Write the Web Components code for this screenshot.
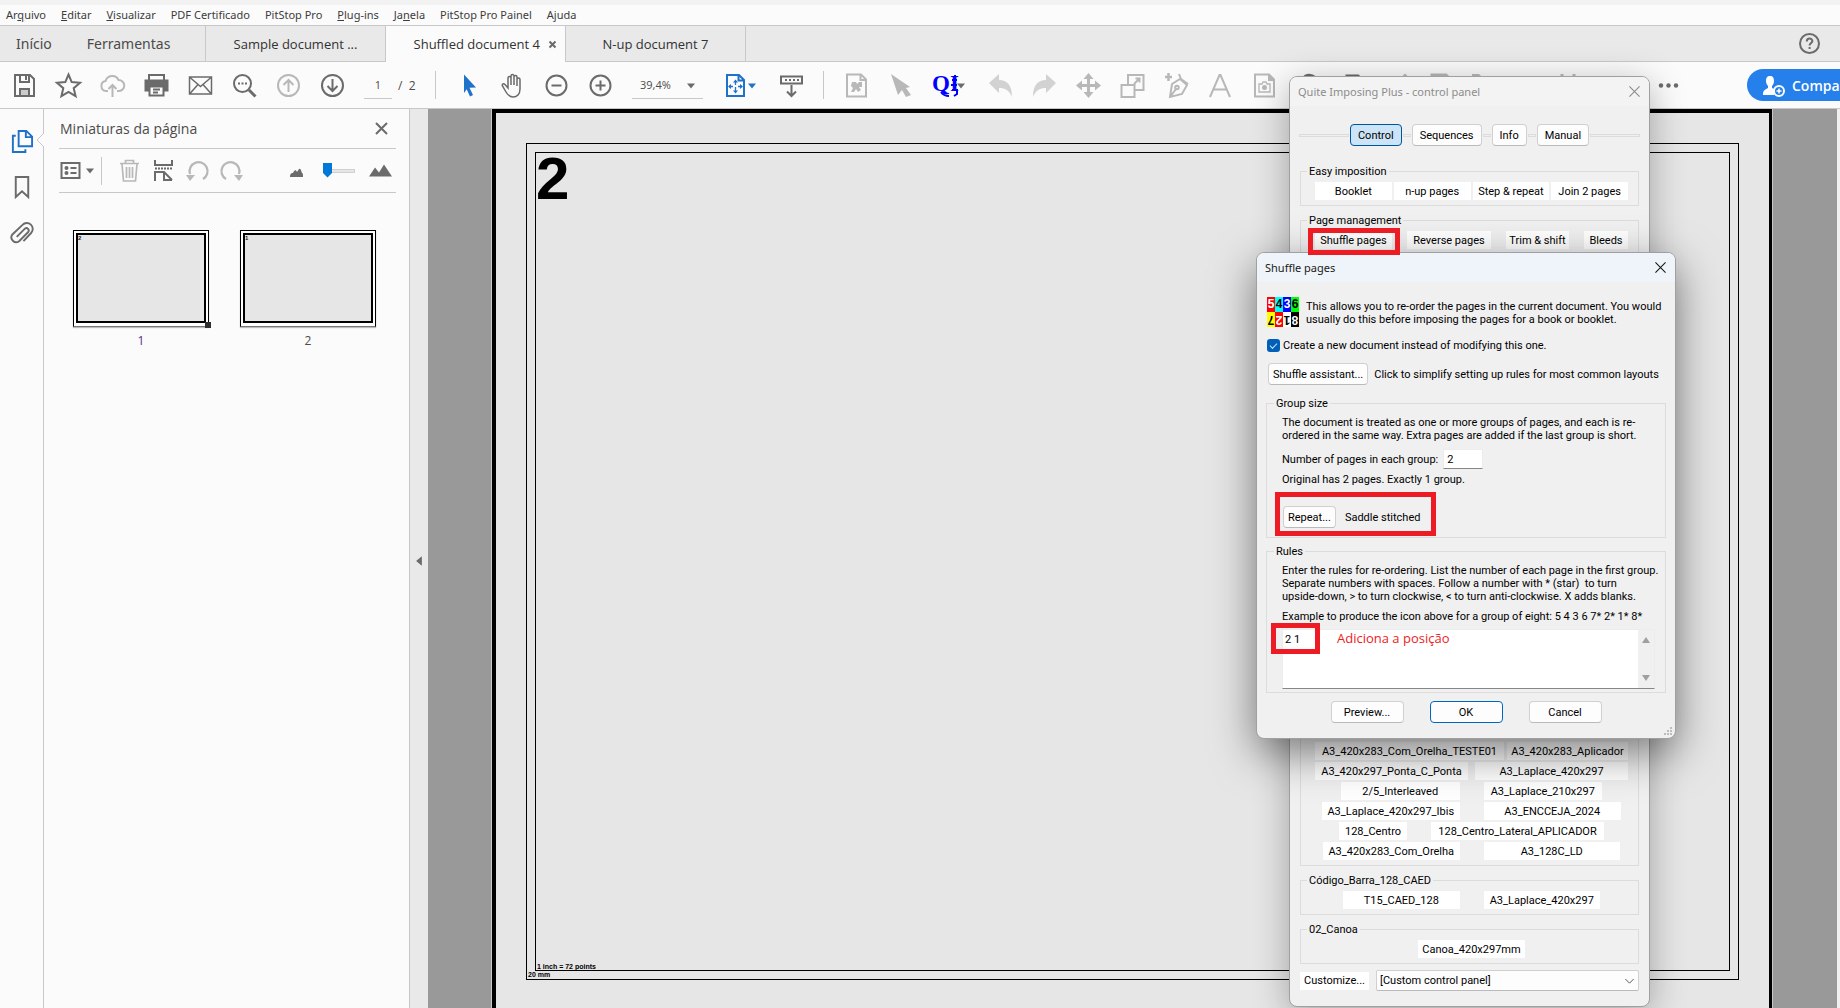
<!DOCTYPE html>
<html lang="pt-BR">
<head>
<meta charset="utf-8">
<title>Shuffled document 4</title>
<style>
  html, body { height: 100%; }
  body {
    margin: 0;
    overflow: hidden;
    font-family: "Open Sans", "Noto Sans", sans-serif;
    font-size: 12px;
    color: #4b4b4b;
    background: #fbfbfb;
    --line: #c8c8c8;
    --icon: #6b6b6b;
    --icon-off: #b8b8b8;
    --accent: #1f72c9;
    --mark: #ed1c24;
  }
</style>
</head>
<body>
<pdf-app></pdf-app>

<script>
const icons = {
  save: `<path d="M3 2h15l4 4v17H3z"/><path d="M8 2v7h9V2M8 23v-7h9v7" /><path d="M14 3v4" /><path d="M9 17h7v5H9z" fill="#ccc" stroke="none"/>`,
  star: `<path d="M12.500 1.500l3.200 7.600 8.300.7-6.300 5.400 1.900 8-7.100-4.300-7.100 4.300 1.900-8L1 9.800l8.300-.7z"/>`,
  cloud: `<path d="M8 18H6a5 5 0 0 1-.5-9.900A7 7 0 0 1 18.500 7a5.500 5.500 0 0 1 .5 11h-2"/><path d="M12.500 24V12M8.500 16l4-4 4 4"/>`,
  print: `<path d="M5 7V2h15v5"/><path d="M1.500 7.500h22v10h-4v-4h-14v4h-4z" fill="currentColor"/><path d="M5.500 13.500h14v9h-14z" fill="#fbfbfb"/><path d="M9 16.500h7M9 19.500h5"/>`,
  mail: `<path d="M1.500 4h22v17h-22zM2 4.500l10.500 9 10.500-9M2 20.500l8-9M23 20.500l-8-9" stroke-width="1.500"/>`,
  search: `<circle cx="10.500" cy="10.500" r="8.500"/><path d="M17 17l6.500 6.500" stroke-width="3"/><path d="M6 10.500h2M9.500 10.500h2M13 10.500h2"/>`,
  up: `<circle cx="12.500" cy="12.500" r="10.500"/><path d="M12.500 19V7M7.500 12l5-5 5 5"/>`,
  down: `<circle cx="12.500" cy="12.500" r="10.500"/><path d="M12.500 6v12M7.500 13l5 5 5-5"/>`,
  arrow: `<path d="M8 1.500l12 13-6.500.3 3.500 7.200-3 1.500-3.300-7.300L8 20z" fill="currentColor" stroke="none"/>`,
  hand: `<path d="M8 15V5a1.500 1.500 0 0 1 3 0v7V3a1.500 1.500 0 0 1 3 0v9V4a1.500 1.500 0 0 1 3 0v9V6.500a1.500 1.500 0 0 1 3 0V16c0 5-3 8-7 8-3.500 0-5-1.500-7-5l-3.500-6c-.8-2 1-3 2.500-1.500z" stroke-width="1.500"/>`,
  minus: `<circle cx="12.500" cy="12.500" r="10"/><path d="M7.500 12.500h10"/>`,
  plus: `<circle cx="12.500" cy="12.500" r="10"/><path d="M7.500 12.500h10M12.500 7.500v10"/>`,
  fit: `<path d="M4 2h12l5 5v16H4zM15.500 2v5.500H21"/><path d="M12.500 8v4M12.500 14v5M6 13.500h4M15 13.500h4" stroke-width="1.300"/><path d="M12.500 6.500l2.500 3h-5zM12.500 20.500l2.500-3h-5zM5 13.500l3-2.500v5zM20 13.500l-3-2.500v5z" fill="currentColor" stroke="none"/>`,
  ruler: `<path d="M2 3.500h21v7H2z"/><path d="M6 7h2M10 7h2M14 7h2M18 7h2M12.500 12v11M8 18.500l4.500 4.500 4.500-4.500"/>`,
  piece: `<path d="M3 1.500h14l5 5V23.500H3zM16.500 1.500V7H22"/><path d="M8 9h4l1 2 2-2h3v5h-3l2 3-3 2-2-3-2 3H7l2-4-2-2z" fill="currentColor" stroke="none"/>`,
  pick: `<path d="M3 1l19 13-4 1 5 7-5 2-4-7-4 5z" fill="currentColor" stroke="none"/>`,
  undo: `<path d="M1 10l10-9v6c8 0 13 5 13 17-3-7-7-9-13-9v5z" fill="currentColor" stroke="none"/>`,
  redo: `<path d="M24 10L14 1v6C6 7 1 12 1 24c3-7 7-9 13-9v5z" fill="currentColor" stroke="none"/>`,
  move: `<path d="M12.500 4v17M4 12.500h17" stroke-width="3"/><path d="M12.500 0l5 6h-10zM12.500 25l5-6h-10zM0 12.500l6-5v10zM25 12.500l-6-5v10z" fill="currentColor" stroke="none"/>`,
  scale: `<path d="M1.500 12h13v12h-13z"/><path d="M8 12V2h15.500v15H15M14 11l6-6M15.500 5.500h4v4"/>`,
  pen: `<path d="M1 4h7M4.500 0v8" stroke-width="2.500"/><path d="M6 24l2-13 8-5 7 6-5 9zM6 24l6-8M15 1l2 5 7 5"/><circle cx="13" cy="14.500" r="1.800"/>`,
  type: `<path d="M2 24l9.500-22h1L22 24M6 16.500h13"/>`,
  camera: `<path d="M3 1.500h14l5 5V23.500H3z"/><path d="M16 1l7 7h-7z" fill="currentColor" stroke="none"/><path d="M7 11h3l1-2h3l1 2h3v8H7z" stroke-width="1.300"/><circle cx="12.500" cy="14.500" r="2.500" fill="currentColor" stroke="none"/>`,
  blob: `<path d="M8 4c2-3 8-3 11 0v12H8z" fill="currentColor"/>`,
  pageDark: `<path d="M7 23V3h11l5 5v15z" stroke-width="3"/>`,
  pageLight: `<path d="M4 23V2h14l5 5v16z" stroke-width="3"/>`,
  peak: `<path d="M15 8l6-6 6 6v14H15z" fill="currentColor"/>`,
  flag: `<path d="M0 1h7l6 6v16H0z" fill="currentColor" stroke="none"/>`,
  bars: `<path d="M2 1v20M14 1v20" stroke-width="3"/>`,
  dots: `<g fill="currentColor" stroke="none"><circle cx="5" cy="12.500" r="2.200"/><circle cx="12.500" cy="12.500" r="2.200"/><circle cx="20" cy="12.500" r="2.200"/></g>`,
  help: `<circle cx="12.500" cy="12.500" r="9.500"/><path d="M9.800 10.500c0-4 5.600-3.600 5.600-.4 0 2-2.800 2-2.800 4.400M12.600 16v2"/>`,
  person: `<path d="M9 3c3 0 4 2 4 5 0 2-1 4-2 5v2l2 1v6H2c0-4 1-5 5-7v-2c-1-1-2-3-2-5 0-3 1-5 4-5z" fill="currentColor" stroke="none"/><circle cx="18" cy="18" r="5" fill="#2680eb"/><path d="M15.500 18h5M18 15.500v5" stroke-width="1.500"/>`,
  pages: `<path d="M9 2h8l6 6v10H9zM16.500 2v6.500H23"/><path d="M6 7H3v17h13v-3"/>`,
  bookmark: `<path d="M6 2h13v21l-6.500-6L6 23z"/>`,
  clip: `<path d="M7 15.500l8.500-8.500a2.500 2.500 0 0 1 3.500 3.500L9.500 20a5 5 0 0 1-7-7L13 3a6 6 0 0 1 9 8.500l-8 8.500" transform="translate(0 1)"/>`,
  list: `<path d="M3.500 5h18v15h-18zM12.500 10h6M12.500 15h6"/><circle cx="8.500" cy="10" r="2" fill="currentColor" stroke="none"/><circle cx="8.500" cy="15" r="2" fill="currentColor" stroke="none"/>`,
  trash: `<path d="M3 5.500h19M8.500 5V2.500h8V5M5 6l1.500 17h12L20 6M9.500 9v11M12.500 9v11M15.500 9v11" stroke-width="1.700"/>`,
  split: `<path d="M4 2v5h17V2M4 23v-9h9l8 8M13 14v8h8"/><path d="M4 10.500h17" stroke-dasharray="2 1"/>`,
  rotateL: `<path d="M18 21A9 9 0 1 0 5 16" stroke-width="2.300"/><path d="M1 17h9l-5 6z" fill="currentColor" stroke="none"/>`,
  rotateR: `<path d="M7 21a9 9 0 1 1 13-5" stroke-width="2.300"/><path d="M15 17h9l-4 6z" fill="currentColor" stroke="none"/>`,
  hillS: `<path d="M6 19c0-4 2-4 3-4 1-3 3-4 4-1l2-3c2-1 2 2 3 4 1 0 1 2 1 4z" fill="currentColor" stroke="none"/>`,
  hillL: `<path d="M1 18.500l6-9 4 5 5-8 8 12z" fill="currentColor" stroke="none"/>`,
  close: `<path d="M7 7l11 11M18 7L7 18"/>`,
  closeThin: `<path d="M7 7l11 11M18 7L7 18" stroke-width="1.200"/>`,
  closeBold: `<path d="M9.500 9.500l6 6M15.500 9.500l-6 6"/>`,
  caret: `<path d="M9 10.500h8l-4 5z" fill="currentColor" stroke="none"/>`,
  caretLeft: `<path d="M16.500 6v13l-8-6.500z" fill="currentColor" stroke="none"/>`,
  chevron: `<path d="M7 10.500l5.500 5.500 5.500-5.500" stroke-width="1.300"/>`,
  logo: `<text x="0" y="18" font-family="Liberation Serif, serif" font-weight="bold" font-size="23" fill="currentColor" stroke="none">QI</text><path d="M9 19c2 3 6 4 8 4M23 2v14M20 7h5M19 12h6M20 17h5v4l-3 2"/>`
};

class UiIcon extends HTMLElement {
  connectedCallback() {
    const size = this.getAttribute("size") || 25;

    this.attachShadow({ mode: "open" }).innerHTML = `
      <style>
        :host { display: inline-flex; flex: none; }
        svg { display: block; overflow: visible; }
      </style>
      <svg width="${size}" height="${size}" viewBox="0 0 25 25" fill="none" stroke="currentColor" stroke-width="2" aria-hidden="true">${icons[this.getAttribute("name")]}</svg>`;
  }
}

// Borderless button around a single icon
class IconButton extends HTMLElement {
  connectedCallback() {
    this.attachShadow({ mode: "open" }).innerHTML = `
      <style>
        :host { display: inline-flex; flex: none; width: 44px; color: var(--icon); }
        :host([off]) { color: var(--icon-off); }
        :host([faint]) { color: #d2d2d2; }
        :host([blue]) { color: var(--accent); }
        :host([tight]) { width: auto; }
        button {
          flex: 1;
          display: flex;
          align-items: center;
          justify-content: center;
          padding: 0;
          border: 0;
          background: none;
          color: inherit;
        }
      </style>
      <button type="button" aria-label="${this.getAttribute("label") || this.getAttribute("name")}">
        <ui-icon name="${this.getAttribute("name")}" size="${this.getAttribute("size") || 25}"></ui-icon>
      </button>`;
  }
}

class MenuBar extends HTMLElement {
  connectedCallback() {
    this.attachShadow({ mode: "open" }).innerHTML = `
      <style>
        :host {
          display: flex;
          gap: 15px;
          height: 20px;
          padding-left: 6px;
          border-top: 5px solid #f2f2f2;
          border-bottom: 1px solid var(--line);
        }
        button {
          padding: 0;
          border: 0;
          background: none;
          font: 11px/20px "Noto Sans", sans-serif;
          color: #3c3c3c;
          white-space: nowrap;
        }
      </style>
      <button>Ar<u>q</u>uivo</button>
      <button><u>E</u>ditar</button>
      <button><u>V</u>isualizar</button>
      <button>PDF Certificado</button>
      <button>PitStop Pro</button>
      <button><u>P</u>lug-ins</button>
      <button>Ja<u>n</u>ela</button>
      <button>PitStop Pro Painel</button>
      <button>Ajuda</button>`;
  }
}

class TabStrip extends HTMLElement {
  connectedCallback() {
    this.attachShadow({ mode: "open" }).innerHTML = `
      <style>
        :host {
          display: flex;
          height: 35px;
          background: #e9e9e9;
          border-bottom: 1px solid var(--line);
        }
        button {
          border: 0;
          padding: 0;
          background: none;
          font: 14px "Noto Sans", sans-serif;
          color: #4b4b4b;
        }
        .home {
          box-sizing: border-box;
          display: flex;
          gap: 35px;
          width: 206px;
          padding-left: 16px;
          border-right: 1px solid var(--line);
        }
        .doc {
          box-sizing: border-box;
          width: 180px;
          display: flex;
          align-items: center;
          justify-content: center;
          border-right: 1px solid var(--line);
        }
        .doc button { font: 13px "Open Sans", sans-serif; color: #323232; white-space: nowrap; }
        .doc.active { justify-content: flex-end; background: #fbfbfb; margin-bottom: -1px; }
        icon-button:last-child { margin: 0 9px 0 auto; }
        .active icon-button:last-child { margin: 0; }
      </style>
      <div class="home"><button>Início</button><button>Ferramentas</button></div>
      <div class="doc"><button>Sample document ...</button></div>
      <div class="doc active"><button>Shuffled document 4</button><icon-button tight name="closeBold" label="Fechar"></icon-button></div>
      <div class="doc"><button>N-up document 7</button></div>
      <icon-button name="help" label="Ajuda"></icon-button>`;
  }
}

class ToolBar extends HTMLElement {
  connectedCallback() {
    this.attachShadow({ mode: "open" }).innerHTML = `
      <style>
        :host {
          display: flex;
          align-items: center;
          height: 46px;
          padding-left: 2px;
          overflow: hidden;
          border-bottom: 1px solid var(--line);
        }
        .page { display: flex; align-items: center; gap: 6px; width: 61px; margin-left: 10px; }
        input, select {
          box-sizing: border-box;
          height: 28px;
          padding: 0;
          border: 0;
          border-bottom: 1px solid var(--line);
          background: none;
          font: 11px "Open Sans", sans-serif;
          color: #4b4b4b;
        }
        input { width: 28px; text-align: center; }
        .zoom { display: grid; align-items: center; justify-items: end; width: 71px; margin: 0 10px; color: var(--icon); }
        .zoom > * { grid-area: 1 / 1; }
        select { appearance: none; width: 100%; padding-left: 8px; }
        .zoom ui-icon { pointer-events: none; }
        i { flex: none; width: 1px; height: 28px; margin: 0 10px; background: var(--line); }
        .drop { flex: none; display: flex; width: 56px; }
        .drop .menu { margin-left: -18px; }
        .share {
          flex: none;
          display: flex;
          align-items: center;
          gap: 6px;
          width: 150px;
          height: 32px;
          margin-left: auto;
          margin-right: -57px;
          padding: 0 0 0 14px;
          border: 0;
          border-radius: 16px;
          background: #2680eb;
          color: #fff;
          font: 600 14px "Open Sans", sans-serif;
        }
      </style>
      <icon-button name="save" label="Salvar"></icon-button>
      <icon-button name="star" label="Favorito"></icon-button>
      <icon-button off name="cloud" label="Enviar"></icon-button>
      <icon-button name="print" label="Imprimir"></icon-button>
      <icon-button name="mail" label="E-mail"></icon-button>
      <icon-button name="search" label="Localizar"></icon-button>
      <icon-button off name="up" label="Página anterior"></icon-button>
      <icon-button name="down" label="Próxima página"></icon-button>
      <div class="page"><input aria-label="Página" value="1"><span>/&nbsp; 2</span></div>
      <i></i>
      <icon-button blue name="arrow" label="Selecionar"></icon-button>
      <icon-button name="hand" label="Mão"></icon-button>
      <icon-button name="minus" label="Reduzir"></icon-button>
      <icon-button name="plus" label="Ampliar"></icon-button>
      <div class="zoom">
        <select aria-label="Zoom"><option>39,4%</option></select>
        <ui-icon name="caret"></ui-icon>
      </div>
      <div class="drop"><icon-button blue name="fit" label="Ajustar"></icon-button><icon-button blue tight class="menu" name="caret" label="Opções de ajuste"></icon-button></div>
      <icon-button name="ruler" label="Rolagem"></icon-button>
      <i></i>
      <icon-button off name="piece"></icon-button>
      <icon-button off name="pick"></icon-button>
      <div class="drop"><icon-button style="color: #00f" name="logo" label="Quite Imposing"></icon-button><icon-button tight class="menu" name="caret" label="Menu"></icon-button></div>
      <icon-button faint name="undo"></icon-button>
      <icon-button faint name="redo"></icon-button>
      <icon-button off name="move"></icon-button>
      <icon-button off name="scale"></icon-button>
      <icon-button off name="pen"></icon-button>
      <icon-button off name="type"></icon-button>
      <icon-button off name="camera"></icon-button>
      <icon-button name="blob"></icon-button>
      <icon-button name="pageDark"></icon-button>
      <icon-button off name="peak"></icon-button>
      <icon-button off name="pageLight"></icon-button>
      <icon-button off name="flag"></icon-button>
      <icon-button off style="margin-left: 44px" name="bars"></icon-button>
      <icon-button style="margin-left: 52px" name="dots" label="Mais"></icon-button>
      <button class="share"><ui-icon name="person"></ui-icon>Compartilhar</button>`;
  }
}

class SideRail extends HTMLElement {
  connectedCallback() {
    this.attachShadow({ mode: "open" }).innerHTML = `
      <style>
        :host {
          flex: none;
          position: relative;
          display: flex;
          flex-direction: column;
          gap: 22px;
          width: 43px;
          padding-top: 20px;
          border-right: 1px solid var(--line);
        }
        .notch {
          position: absolute;
          right: -1px;
          top: 24px;
          fill: #fbfbfb;
          stroke: var(--line);
        }
      </style>
      <icon-button blue size="24" name="pages" label="Miniaturas"></icon-button>
      <icon-button size="24" name="bookmark" label="Marcadores"></icon-button>
      <icon-button size="24" name="clip" label="Anexos"></icon-button>
      <svg class="notch" width="8" height="14"><path d="M8 0L1 7l7 7" /></svg>`;
  }
}

class PageThumb extends HTMLElement {
  connectedCallback() {
    this.attachShadow({ mode: "open" }).innerHTML = `
      <style>
        :host { display: flex; flex-direction: column; align-items: center; gap: 4px; color: #4b4b4b; }
        :host([current]) { color: #5b2d8a; }
        .sheet {
          position: relative;
          box-sizing: border-box;
          width: 136px;
          height: 97px;
          padding: 2px 2px 3px;
          border: 1px solid #000;
          border-bottom-color: #777;
          background: #fff;
          display: flex;
          box-shadow: 0 1px 1px #bbb;
        }
        .inner {
          flex: 1;
          border: 2px solid #000;
          background: #e6e6e6;
          font: bold 6px/6px "Liberation Sans", sans-serif;
          color: #222;
        }
        .grip { display: none; position: absolute; right: -3px; bottom: -2px; width: 6px; height: 6px; background: #2e2e2e; }
        :host([current]) .grip { display: block; }
        span { line-height: 20px; }
      </style>
      <div class="sheet"><div class="inner">${this.getAttribute("mark")}</div><div class="grip"></div></div>
      <span><slot></slot></span>`;
  }
}

class ThumbPanel extends HTMLElement {
  connectedCallback() {
    this.attachShadow({ mode: "open" }).innerHTML = `
      <style>
        :host {
          flex: none;
          box-sizing: border-box;
          width: 366px;
          padding: 0 13px 0 15px;
          border-right: 1px solid var(--line);
        }
        header { display: flex; align-items: center; justify-content: space-between; height: 39px; border-bottom: 1px solid var(--line); }
        h2 { margin: 0 1px; font-size: 14px; font-weight: normal; color: #4b4b4b; }
        header icon-button { margin-right: 2px; }
        .tools { display: flex; align-items: center; height: 43px; border-bottom: 1px solid var(--line); }
        .tools i { width: 1px; height: 28px; background: var(--line); margin: 0 15px 0 0; }
        .tools icon-button { width: 25px; margin-right: 9px; }
        .tools .list { margin: 0 -2px 0 -1px; }
        .tools .menu { margin: 0 -1px 0 -4px; }
        .tools .small { margin-left: auto; }
        input { appearance: none; width: 32px; height: 16px; margin: 0 13px 0 5px; background: none; }
        input::-webkit-slider-runnable-track { height: 4px; background: #e6e6e6; box-shadow: inset 0 0 0 1px #d0d0d0; }
        input::-webkit-slider-thumb {
          appearance: none;
          width: 9px;
          height: 15px;
          margin-top: -6px;
          background: #0078d7;
          clip-path: polygon(0 0, 100% 0, 100% 70%, 50% 100%, 0 70%);
        }
        .pages { display: flex; gap: 31px; padding: 37px 14px; }
      </style>
      <header><h2>Miniaturas da página</h2><icon-button tight name="close" label="Fechar"></icon-button></header>
      <div class="tools">
        <icon-button class="list" name="list" label="Opções"></icon-button>
        <icon-button class="menu" name="caret" label="Menu"></icon-button>
        <i></i>
        <icon-button off name="trash" label="Excluir"></icon-button>
        <icon-button name="split" label="Extrair"></icon-button>
        <icon-button off name="rotateL" label="Girar à esquerda"></icon-button>
        <icon-button off name="rotateR" label="Girar à direita"></icon-button>
        <icon-button class="small" name="hillS" label="Menor"></icon-button>
        <input type="range" min="0" max="100" value="0" aria-label="Tamanho">
        <icon-button style="margin-right: 3px" name="hillL" label="Maior"></icon-button>
      </div>
      <div class="pages">
        <page-thumb current mark="2">1</page-thumb>
        <page-thumb mark="1">2</page-thumb>
      </div>`;
  }
}

class PageView extends HTMLElement {
  connectedCallback() {
    this.attachShadow({ mode: "open" }).innerHTML = `
      <style>
        :host { flex: 1; display: flex; min-width: 0; background: #999; }
        .gutter { display: flex; width: 18px; background: #e9e9e9; }
        .gutter icon-button { width: 18px; padding-top: 5px; }
        .page {
          flex: 1;
          display: flex;
          margin: 0 65px 0 64px;
          padding: 30px 30px 28px;
          border: solid #000;
          border-width: 4px 3px 0 4px;
          box-shadow: 0 0 0 1px var(--line);
          background: #e6e6e6;
          color: #000;
          font-family: "Liberation Sans", sans-serif;
          font-weight: bold;
        }
        .margin { flex: 1; display: flex; flex-direction: column; padding: 8px 8px 0; border: 1px solid #000; }
        .trim { flex: 1; display: flex; flex-direction: column; justify-content: space-between; border: 1px solid #000; }
        .number { font-size: 60px; line-height: 52px; }
        small { font-size: 7px; line-height: 8px; padding-left: 1px; }
        .trim small { line-height: 6px; }
        .margin > small { margin-left: -8px; }
        .scroll { width: 3px; background: #f0f0f0; }
      </style>
      <div class="gutter"><icon-button size="18" name="caretLeft" label="Recolher"></icon-button></div>
      <div class="page">
        <div class="margin">
          <div class="trim"><span class="number">2</span><small>1 inch = 72 points</small></div>
          <small>20 mm</small>
        </div>
      </div>
      <div class="scroll"></div>`;
  }
}

class WinDialog extends HTMLElement {
  connectedCallback() {
    this.attachShadow({ mode: "open" }).innerHTML = `
      <style>
        :host {
          box-sizing: border-box;
          display: flex;
          flex-direction: column;
          min-width: 0;
          border: 1px solid #a0a0a0;
          border-radius: 8px;
          background: #f0f0f0;
          box-shadow: 0 8px 36px rgba(0, 0, 0, .3);
          font: 11px/13px Roboto, "Liberation Sans", sans-serif;
          color: #000;
          --title-bg: #f3f3f3;
          --title-fg: #8c8c8c;
        }
        :host([active]) {
          box-shadow: 0 14px 44px rgba(0, 0, 0, .5);
          --title-bg: #eef4f9;
          --title-fg: #1a1a1a;
        }
        header {
          display: flex;
          align-items: center;
          justify-content: space-between;
          height: 29px;
          padding: 0 3px 0 8px;
          border-radius: 7px 7px 0 0;
          background: var(--title-bg);
          color: var(--title-fg);
          font: 11px "Noto Sans", sans-serif;
        }
        header icon-button { color: inherit; }
        .body { flex: 1; display: flex; flex-direction: column; padding: 0 9px 15px; }
      </style>
      <header><span>${this.getAttribute("caption")}</span><icon-button tight size="23" name="closeThin" label="Close"></icon-button></header>
      <div class="body"><slot></slot></div>`;
  }
}

class WinButton extends HTMLElement {
  connectedCallback() {
    this.attachShadow({ mode: "open" }).innerHTML = `
      <style>
        :host { display: inline-flex; }
        button {
          flex: 1;
          height: 22px;
          padding: 0 4px;
          border: 1px solid #d0d0d0;
          border-bottom-color: #bababa;
          border-radius: 4px;
          background: #fdfdfd;
          font: inherit;
          color: #000;
          white-space: nowrap;
        }
        :host([primary]) button { border-color: #0067c0; }
        :host([pressed]) button { border-color: #005499; background: #cce4f7; }
        :host([flat]) button { height: 18px; padding: 0; border: 0; border-radius: 0; background: #fff; }
        :host([wide]) button { padding: 0 7px; }
      </style>
      <button type="button"><slot></slot></button>`;
  }
}

class GroupBox extends HTMLElement {
  connectedCallback() {
    this.attachShadow({ mode: "open" }).innerHTML = `
      <style>
        :host { display: flex; flex-direction: column; }
        fieldset {
          flex: 1;
          min-width: 0;
          margin: 0;
          padding: 4px 10px 5px 14px;
          border: 1px solid #dcdcdc;
        }
        :host([roomy]) fieldset { padding: 6px 10px 3px 15px; }
        legend { height: 13px; margin-left: -8px; padding: 0 2px; }
        .content { height: 100%; display: flex; flex-direction: column; justify-content: flex-end; gap: 2px; }
      </style>
      <fieldset><legend>${this.getAttribute("caption")}</legend><div class="content"><slot></slot></div></fieldset>`;
  }
}

// Red frame drawn round whatever is slotted in
class MarkBox extends HTMLElement {
  connectedCallback() {
    this.attachShadow({ mode: "open" }).innerHTML = `
      <style>
        :host { position: relative; display: flex; --inset: -3px -8px -6px -7px; }
        .frame {
          position: absolute;
          z-index: 3;
          inset: var(--inset);
          border: 5px solid var(--mark);
          pointer-events: none;
        }
      </style>
      <slot></slot><div class="frame"></div>`;
  }
}

class ControlPanel extends HTMLElement {
  connectedCallback() {
    this.attachShadow({ mode: "open" }).innerHTML = `
      <style>
        :host { display: flex; }
        win-dialog { flex: 1; }
        .tabs { display: flex; align-items: center; gap: 1px; margin: 18px 0 19px; }
        .tabs i { width: 6px; height: 1px; border: 1px solid #dcdcdc; }
        .tabs i:first-child, .tabs i:last-child { flex: 1; }
        group-box { margin: 0 1px 8px; }
        group-box.last { margin-bottom: 6px; }
        .fill { flex: 1; }
        .row { display: grid; }
        .four { grid-template-columns: repeat(4, 1fr); gap: 2px; }
        .manage { grid-template-columns: 77px 84px 63px 44px; justify-content: space-between; }
        .custom { display: flex; gap: 7px; margin: 0 1px; }
        .custom win-button { width: 69px; height: 18px; align-self: center; }
        .pick { flex: 1; display: grid; align-items: center; justify-items: end; }
        .pick > * { grid-area: 1 / 1; }
        .pick ui-icon { pointer-events: none; color: #555; }
        select {
          appearance: none;
          box-sizing: border-box;
          width: 100%;
          height: 21px;
          padding: 0 3px;
          border: 1px solid #d0d0d0;
          border-bottom-color: #bababa;
          border-radius: 2px;
          background: #fdfdfd;
          font: inherit;
          color: #000;
        }
      </style>
      <win-dialog caption="Quite Imposing Plus - control panel">
        <div class="tabs">
          <i></i><win-button wide pressed>Control</win-button>
          <i></i><win-button wide>Sequences</win-button>
          <i></i><win-button wide>Info</win-button>
          <i></i><win-button wide>Manual</win-button><i></i>
        </div>
        <group-box caption="Easy imposition">
          <div class="row four">
            <win-button flat>Booklet</win-button><win-button flat>n-up pages</win-button>
            <win-button flat>Step &amp; repeat</win-button><win-button flat>Join 2 pages</win-button>
          </div>
        </group-box>
        <group-box caption="Page management">
          <div class="row manage">
            <mark-box><win-button flat style="flex: 1">Shuffle pages</win-button></mark-box>
            <win-button flat>Reverse pages</win-button>
            <win-button flat>Trim &amp; shift</win-button>
            <win-button flat>Bleeds</win-button>
          </div>
        </group-box>
        <group-box class="fill" caption="">
          <div class="row" style="grid-template-columns: 189px 1fr; gap: 3px"><win-button flat>A3_420x283_Com_Orelha_TESTE01</win-button><win-button flat>A3_420x283_Aplicador</win-button></div>
          <div class="row" style="grid-template-columns: 1fr 1fr; gap: 7px"><win-button flat>A3_420x297_Ponta_C_Ponta</win-button><win-button flat>A3_Laplace_420x297</win-button></div>
          <div class="row" style="grid-template-columns: 1fr 1fr; gap: 24px; padding: 0 26px"><win-button flat>2/5_Interleaved</win-button><win-button flat>A3_Laplace_210x297</win-button></div>
          <div class="row" style="grid-template-columns: 1fr 1fr; gap: 24px; padding: 0 7px"><win-button flat>A3_Laplace_420x297_Ibis</win-button><win-button flat>A3_ENCCEJA_2024</win-button></div>
          <div class="row" style="grid-template-columns: 68px 1fr; gap: 24px; padding: 0 24px"><win-button flat>128_Centro</win-button><win-button flat>128_Centro_Lateral_APLICADOR</win-button></div>
          <div class="row" style="grid-template-columns: 1fr 1fr; gap: 24px; padding: 0 8px"><win-button flat>A3_420x283_Com_Orelha</win-button><win-button flat>A3_128C_LD</win-button></div>
        </group-box>
        <group-box caption="Código_Barra_128_CAED">
          <div class="row" style="grid-template-columns: 1fr 1fr; gap: 24px; padding: 0 28px"><win-button flat>T15_CAED_128</win-button><win-button flat>A3_Laplace_420x297</win-button></div>
        </group-box>
        <group-box class="last" caption="02_Canoa">
          <div class="row" style="grid-template-columns: 107px; justify-content: center"><win-button flat>Canoa_420x297mm</win-button></div>
        </group-box>
        <div class="custom">
          <win-button flat>Customize...</win-button>
          <div class="pick">
            <select aria-label="Control panel"><option>[Custom control panel]</option></select>
            <ui-icon name="chevron" size="19"></ui-icon>
          </div>
        </div>
      </win-dialog>`;
  }
}

class ShuffleIcon extends HTMLElement {
  connectedCallback() {
    const cells = [
      ["5", "#f00", "#fff"], ["4", "#0ff", "#000"], ["3", "#00f", "#fff"], ["6", "#0f0", "#000"],
      ["7", "#ff0", "#000"], ["2", "#f00", "#fff"], ["1", "#fff", "#000"], ["8", "#000", "#fff"]
    ];

    this.attachShadow({ mode: "open" }).innerHTML = `
      <style>
        :host {
          flex: none;
          display: grid;
          grid-template: repeat(2, 15px) / repeat(4, 8px);
          font: bold 12px/15px "Liberation Sans", sans-serif;
          text-align: center;
        }
        b:nth-of-type(n + 5) { transform: rotate(180deg); }
      </style>
      ${cells.map(([n, bg, fg]) => `<b style="background: ${bg}; color: ${fg}">${n}</b>`).join("")}`;
  }
}

class ShuffleDialog extends HTMLElement {
  connectedCallback() {
    this.attachShadow({ mode: "open" }).innerHTML = `
      <style>
        :host { display: flex; }
        win-dialog { flex: 1; position: relative; }
        p { margin: 0; white-space: pre; }
        .line { display: flex; align-items: center; }
        .intro { gap: 7px; margin: 15px 0 12px 1px; }
        .intro p { padding-top: 2px; }
        .new { gap: 3px; margin: 0 0 11px 1px; }
        .new input {
          appearance: none;
          width: 13px;
          height: 13px;
          margin: 0;
          border-radius: 3px;
          background: #005fb8;
          display: grid;
          place-items: center;
        }
        .new input::after {
          content: "";
          width: 6px;
          height: 3px;
          margin-top: -2px;
          border: solid #cfe3f5;
          border-width: 0 0 1px 1px;
          transform: rotate(-45deg);
        }
        .assist { gap: 6px; margin: 0 0 12px 2px; }
        group-box { margin-bottom: 7px; min-width: 0; }
        .count { gap: 5px; margin-top: 5px; }
        .count input {
          box-sizing: border-box;
          width: 40px;
          height: 20px;
          padding: 0 3px;
          border: 1px solid #ececec;
          border-bottom-color: #868686;
          background: #fff;
          font: inherit;
        }
        .total { margin-top: 2px; }
        .repeat { align-self: flex-start; align-items: center; gap: 9px; margin: 18px 0 6px 1px; --inset: -14px -16px -8px -8px; }
        .example { margin: 5px 0 4px; }
        .rules {
          position: relative;
          display: flex;
          border: 1px solid #ececec;
          border-bottom-color: #868686;
          background: #fff;
        }
        textarea {
          flex: 1;
          height: 58px;
          box-sizing: border-box;
          padding: 3px 2px;
          border: 0;
          resize: none;
          background: none;
          font: inherit;
          overflow: hidden;
        }
        .bar { display: flex; flex-direction: column; justify-content: space-between; align-items: center; width: 16px; padding: 7px 0; background: #f0f0f0; box-sizing: border-box; }
        .bar svg { fill: #a0a0a0; }
        .rules .frame { position: absolute; z-index: 3; left: -12px; top: -7px; width: 39px; height: 21px; border: 5px solid var(--mark); pointer-events: none; }
        .note { position: absolute; left: 54px; top: -1px; font: 13px/18px "Open Sans", sans-serif; color: var(--mark); pointer-events: none; }
        .actions { display: flex; justify-content: center; gap: 26px; margin-top: 1px; }
        .actions win-button { width: 73px; }
        .grip { position: absolute; right: 3px; bottom: 3px; fill: #bdbdbd; }
      </style>
      <win-dialog active caption="Shuffle pages">
        <div class="line intro">
          <shuffle-icon></shuffle-icon>
          <p>This allows you to re-order the pages in the current document. You would
usually do this before imposing the pages for a book or booklet.</p>
        </div>
        <div class="line new"><input type="checkbox" id="new" checked><label for="new">Create a new document instead of modifying this one.</label></div>
        <div class="line assist"><win-button>Shuffle assistant...</win-button><span>Click to simplify setting up rules for most common layouts</span></div>
        <group-box roomy caption="Group size">
          <p>The document is treated as one or more groups of pages, and each is re-
ordered in the same way. Extra pages are added if the last group is short.</p>
          <div class="line count"><label for="count">Number of pages in each group:</label><input id="count" value="2"></div>
          <p class="total">Original has 2 pages. Exactly 1 group.</p>
          <mark-box class="repeat"><win-button>Repeat...</win-button><span>Saddle stitched</span></mark-box>
        </group-box>
        <group-box roomy caption="Rules">
          <p>Enter the rules for re-ordering. List the number of each page in the first group.
Separate numbers with spaces. Follow a number with * (star)&nbsp; to turn
upside-down, &gt; to turn clockwise, &lt; to turn anti-clockwise. X adds blanks.</p>
          <p class="example"><label for="rules">Example to produce the icon above for a group of eight: 5 4 3 6 7* 2* 1* 8*</label></p>
          <div class="rules">
            <textarea id="rules">2 1</textarea>
            <div class="bar">
              <svg width="8" height="6"><path d="M4 0l4 6H0z" /></svg>
              <svg width="8" height="6"><path d="M0 0h8L4 6z" /></svg>
            </div>
            <div class="frame"></div>
            <span class="note">Adiciona a posição</span>
          </div>
        </group-box>
        <div class="actions">
          <win-button>Preview...</win-button><win-button primary>OK</win-button><win-button>Cancel</win-button>
        </div>
        <svg class="grip" width="8" height="8"><path d="M6 0h2v2H6zM3 3h2v2H3zM6 3h2v2H6zM0 6h2v2H0zM3 6h2v2H3zM6 6h2v2H6z" /></svg>
      </win-dialog>`;
  }
}

class PdfApp extends HTMLElement {
  connectedCallback() {
    this.attachShadow({ mode: "open" }).innerHTML = `
      <style>
        :host { position: relative; display: flex; flex-direction: column; height: 100vh; overflow: hidden; }
        main { flex: 1; display: flex; min-height: 0; }
        /* floating windows; the panel has no z-index so its red frame can sit over the dialog */
        control-panel { position: absolute; top: 76px; bottom: 1px; right: 190px; width: 361px; }
        shuffle-dialog { position: absolute; z-index: 2; top: 252px; right: 164px; width: 420px; }
      </style>
      <menu-bar></menu-bar>
      <tab-strip></tab-strip>
      <tool-bar></tool-bar>
      <main>
        <side-rail></side-rail>
        <thumb-panel></thumb-panel>
        <page-view></page-view>
      </main>
      <control-panel></control-panel>
      <shuffle-dialog></shuffle-dialog>`;
  }
}

customElements.define("ui-icon", UiIcon);
customElements.define("icon-button", IconButton);
customElements.define("menu-bar", MenuBar);
customElements.define("tab-strip", TabStrip);
customElements.define("tool-bar", ToolBar);
customElements.define("side-rail", SideRail);
customElements.define("page-thumb", PageThumb);
customElements.define("thumb-panel", ThumbPanel);
customElements.define("page-view", PageView);
customElements.define("win-dialog", WinDialog);
customElements.define("win-button", WinButton);
customElements.define("group-box", GroupBox);
customElements.define("mark-box", MarkBox);
customElements.define("control-panel", ControlPanel);
customElements.define("shuffle-icon", ShuffleIcon);
customElements.define("shuffle-dialog", ShuffleDialog);
customElements.define("pdf-app", PdfApp);
</script>
</body>
</html>
